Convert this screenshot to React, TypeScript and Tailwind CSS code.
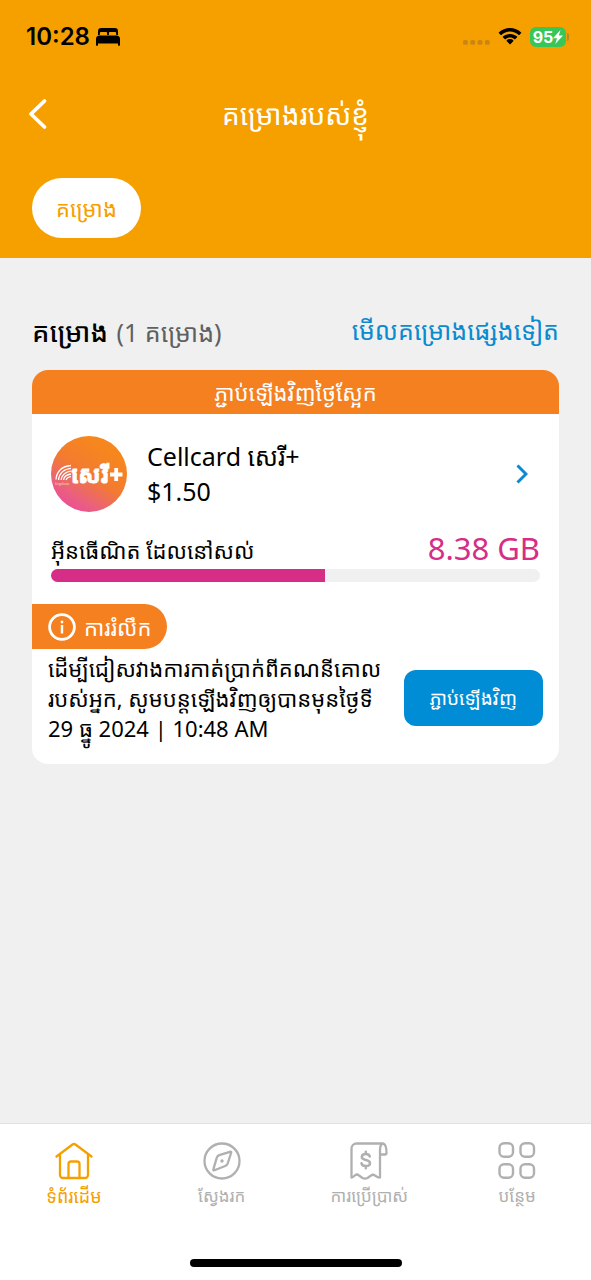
import type { ReactNode } from "react";

function StatusBar() {
  return (
    <div className="flex h-[74px] items-center justify-between pr-[22px] pl-[26px] text-black">
      <div className="flex items-center gap-1.5">
        <span className="font-['Inter',sans-serif] text-2xl leading-8 font-semibold">10:28</span>
        <svg width="24" height="18" viewBox="0 0 24 18" fill="currentColor" aria-hidden="true">
          <path d="M2 7V3.200C2 1.200 3.200 0 5.200 0h13.600C20.800 0 22 1.200 22 3.200V7h-1.800V5.400c0-.9-.6-1.400-1.500-1.400h-4.400c-1 0-1.400.5-1.400 1.400V7h-1.800V5.400c0-.9-.4-1.400-1.400-1.400H5.300c-.9 0-1.500.5-1.500 1.400V7z" />
          <path d="M3.500 7.500h17c2.200 0 3.500 1.300 3.500 3.500v5.800c0 .7-.4 1.200-1 1.200s-1-.5-1-1.200V15.500H2v1.300c0 .7-.4 1.200-1 1.200s-1-.5-1-1.200V11c0-2.200 1.300-3.500 3.500-3.500z" />
        </svg>
      </div>
      <div className="flex items-center gap-2">
        <svg width="27" height="24" viewBox="0 0 27 24" fill="#c98613" aria-hidden="true">
          <rect x="0" y="15" width="4.800" height="4.800" rx="1.500" />
          <rect x="7.300" y="15" width="4.800" height="4.800" rx="1.500" />
          <rect x="14.600" y="15" width="4.800" height="4.800" rx="1.500" />
          <rect x="21.900" y="15" width="4.800" height="4.800" rx="1.500" />
        </svg>
        <svg width="24" height="18" viewBox="0 0 24 18" fill="currentColor" aria-hidden="true">
          <path d="M12 3.600c3.300 0 6.300 1.300 8.600 3.400.2.200.5.200.7 0l1.900-1.900c.2-.2.200-.5 0-.7C20.200 1.600 16.300 0 12 0S3.800 1.600.8 4.400c-.2.200-.2.500 0 .7L2.700 7c.2.200.5.200.7 0C5.700 4.900 8.700 3.600 12 3.600z" />
          <path d="M12 9.600c1.700 0 3.200.6 4.400 1.700.2.200.5.200.7 0l2-2c.2-.2.200-.5 0-.7C17.200 6.900 14.700 5.900 12 5.900S6.800 6.900 4.900 8.600c-.2.200-.2.500 0 .7l2 2c.2.200.5.200.7 0 1.200-1.100 2.700-1.700 4.400-1.700z" />
          <path d="M15.400 13.100c.2-.2.200-.5 0-.7-.9-.8-2.100-1.300-3.400-1.300s-2.500.5-3.400 1.300c-.2.200-.2.500 0 .7l3.100 3.100c.2.200.5.200.7 0z" />
        </svg>
        <div className="flex items-center gap-px">
          <div className="flex h-5 w-9 items-center justify-center rounded-md bg-[#37c759] text-white">
            <span className="font-['Inter',sans-serif] text-base leading-5 font-bold">95</span>
            <svg width="10" height="14" viewBox="0 0 10 14" fill="currentColor" aria-hidden="true">
              <path d="M7.500 0 0 8.200h4L2.300 14 10 5.600H5.800z" />
            </svg>
          </div>
          <div className="h-2 w-0.5 rounded-r-full bg-[#b58a2a]" />
        </div>
      </div>
    </div>
  );
}

function PlanLogo() {
  return (
    <svg className="size-19 shrink-0" viewBox="0 0 76 76" role="img" aria-label="សេរី+">
      <defs>
        <linearGradient id="logo-fill" x1="0.150" y1="0.950" x2="0.650" y2="0.150">
          <stop offset="0" stopColor="#ec4a9c" />
          <stop offset="0.250" stopColor="#ea617c" />
          <stop offset="0.600" stopColor="#f37b30" />
          <stop offset="1" stopColor="#f6861e" />
        </linearGradient>
      </defs>
      <circle cx="38" cy="38" r="38" fill="url(#logo-fill)" />
      <g fill="none" stroke="#fff" strokeWidth="1.300">
        <path d="M5 43.500C5.500 35.500 11 30 20 29.500" />
        <path d="M7.500 44C8 37.500 13 32.800 20 32.300" />
        <path d="M10 44C10.500 39.500 14.500 35.600 20 35.100" />
        <path d="M12.500 44C13 41 16 38.500 20 38" />
        <path d="M15 44c.5-1.500 2-3 5-3.400" />
      </g>
      <text x="4" y="48.500" fontSize="4" fill="#fbd0bb" fontFamily="Noto Sans, sans-serif">bigdata</text>
      <text x="20" y="47" fontSize="23" fontWeight="700" fill="#fff" stroke="#fff" strokeWidth="0.800" fontFamily="Noto Sans, Noto Sans Khmer, sans-serif">សេរី</text>
      <path d="M59 38.500H71.500M65.200 32v13" stroke="#fff" strokeWidth="3.800" />
    </svg>
  );
}

function HomeIcon() {
  return (
    <svg width="38" height="38" viewBox="0 0 38 38" fill="none" stroke="currentColor" strokeWidth="2.300" strokeLinecap="round" strokeLinejoin="round" aria-hidden="true">
      <path d="M1.500 14.500 17.500 2.500q1.500-1 3 0L36.500 14.500" />
      <path d="M5 12.500v20.500a3 3 0 0 0 3 3h22a3 3 0 0 0 3-3V12.500" />
      <path d="M13.500 35.500V22a2.500 2.500 0 0 1 2.500-2.500h6a2.500 2.500 0 0 1 2.500 2.500v13.500" />
    </svg>
  );
}

function CompassIcon() {
  return (
    <svg width="38" height="38" viewBox="0 0 38 38" fill="none" stroke="currentColor" strokeWidth="2.300" strokeLinejoin="round" aria-hidden="true">
      <circle cx="19" cy="19" r="17.500" />
      <path d="M16.200 13.200 27 9.800q1.600-.4 1.100 1.200L24.700 21.500a4 4 0 0 1-2.500 2.500L11.400 28.200q-1.500.4-1-1.100l3.400-11.400a4 4 0 0 1 2.400-2.500z" />
      <circle cx="19" cy="19" r="1.700" fill="currentColor" stroke="none" />
    </svg>
  );
}

function ReceiptIcon() {
  return (
    <svg width="38" height="38" viewBox="0 0 38 38" fill="none" stroke="currentColor" strokeWidth="2.300" strokeLinecap="round" strokeLinejoin="round" aria-hidden="true">
      <path d="M33 1.500H6.500A5 5 0 0 0 1.500 6.500V35.500q1 .2 3.300-2Q7 31.500 9 33.500l3.500 2.500q2.500 1.200 5 0l3.500-2.500q2-1.500 4 0Q28.500 36 30 35.500V8.500q0-6.500 3-7 3.500.5 3.500 9.500 0 1.500-1.500 1.500H30" />
      <path strokeWidth="2.500" d="M19.800 14.500c-.4-1.600-1.900-2.500-4-2.500-2.400 0-4 1.200-4 3 0 4 8.200 2 8.200 6 0 1.900-1.700 3.100-4.200 3.100-2.300 0-4-1-4.300-2.800M15.800 9.800V12M15.800 24.200v2" />
    </svg>
  );
}

function GridIcon() {
  return (
    <svg width="38" height="38" viewBox="0 0 38 38" fill="none" stroke="currentColor" strokeWidth="2.400" aria-hidden="true">
      <rect x="1.500" y="1.200" width="13.500" height="13.500" rx="4.500" />
      <rect x="22.500" y="1.200" width="13.500" height="13.500" rx="4.500" />
      <rect x="1.500" y="22.200" width="13.500" height="13.500" rx="4.500" />
      <rect x="22.500" y="22.200" width="13.500" height="13.500" rx="4.500" />
    </svg>
  );
}

function NavItem({ label, icon, active = false }: { label: string; icon: ReactNode; active?: boolean }) {
  return (
    <a
      href="#"
      aria-current={active ? "page" : undefined}
      className={active ? "flex flex-1 flex-col items-center gap-1 text-lg text-[#f6a000]" : "flex flex-1 flex-col items-center gap-1 text-[17px] text-[#b0b0b0]"}
    >
      {icon}
      <span className="leading-6 whitespace-nowrap">{label}</span>
    </a>
  );
}

export default function App() {
  return (
    <div className="flex min-h-screen flex-col bg-[#f0f0f0] font-['Noto_Sans','Noto_Sans_Khmer',sans-serif] text-black">
      <header className="bg-[#f6a000] pb-5">
        <StatusBar />
        <div className="grid grid-cols-[1fr_auto_1fr] items-center px-7 pt-[18px]">
          <button type="button" aria-label="Back" className="flex h-11 w-5 items-center text-white">
            <svg width="20" height="32" viewBox="0 0 20 32" fill="none" stroke="currentColor" strokeWidth="3.800" strokeLinecap="round" strokeLinejoin="round" aria-hidden="true">
              <path d="M16.500 3 3 16l13.500 13" />
            </svg>
          </button>
          <h1 className="text-[28px] leading-8 text-white">គម្រោងរបស់ខ្ញុំ</h1>
        </div>
        <div className="px-8 pt-[42px]">
          <button type="button" className="h-15 rounded-full bg-white px-6 text-[22px] leading-7 text-[#f6a000]">គម្រោង</button>
        </div>
      </header>

      <main className="flex-1 px-8 pt-14">
        <div className="flex items-start justify-between">
          <h2 className="text-[25px] leading-9 whitespace-nowrap">
            <span className="mr-0.5 text-[27px] font-medium">គម្រោង</span> <span className="text-[#606060]">(1 គម្រោង)</span>
          </h2>
          <a href="#" className="text-[25px] leading-8 whitespace-nowrap text-[#0a8bd0]">មើលគម្រោងផ្សេងទៀត</a>
        </div>

        <section className="mt-5 overflow-hidden rounded-2xl bg-white pb-[21px]">
          <p className="bg-[#f58020] py-2 text-center text-[22px] leading-7 text-white">ភ្ជាប់ឡើងវិញថ្ងៃស្អែក</p>
          <a href="#" className="mx-[19px] mt-[22px] flex items-center">
            <PlanLogo />
            <span className="ml-5 flex-1 text-[25px] leading-[35px]">
              <span className="block">Cellcard សេរី+</span>
              <span className="block">$1.50</span>
            </span>
            <svg className="mr-3" width="12" height="20" viewBox="0 0 12 20" fill="none" stroke="#0a8bd0" strokeWidth="3" aria-hidden="true">
              <path d="m1.500 1.500 8.500 8.500-8.500 8.500" />
            </svg>
          </a>
          <div className="mx-[19px] mt-4">
            <div className="flex items-end justify-between pb-px">
              <span className="text-[22px] leading-9">អ៊ីនធើណិត ដែលនៅសល់</span>
              <span className="text-[31px] leading-10 text-[#d62d87]">8.38 GB</span>
            </div>
            <div role="progressbar" aria-label="8.38 GB" aria-valuenow={56} aria-valuemin={0} aria-valuemax={100} className="h-[13px] overflow-hidden rounded-full bg-[#f0f0f0]">
              <div className="h-full bg-[#d62d87]" style={{ width: "56%" }} />
            </div>
          </div>
          <div className="mt-[22px] flex">
            <div className="flex h-[45px] items-center gap-2 rounded-r-full bg-[#f58020] px-4 text-[22px] leading-7 text-white">
              <svg width="28" height="28" viewBox="0 0 28 28" fill="none" stroke="currentColor" strokeWidth="2.800" aria-hidden="true">
                <circle cx="14" cy="14" r="12.400" />
                <path d="M14 12v8.500M14 7.800v2.500" strokeWidth="2.400" />
              </svg>
              ការរំលឹក
            </div>
          </div>
          <div className="mx-4 mt-1 flex items-center justify-between">
            <p className="text-[22px] leading-[30px] whitespace-nowrap">
              ដើម្បីជៀសវាងការកាត់ប្រាក់ពីគណនីគោល
              <br />
              របស់អ្នក, សូមបន្តឡើងវិញឲ្យបានមុនថ្ងៃទី
              <br />
              29 ធ្នូ 2024 | 10:48 AM
            </p>
            <button type="button" className="h-14 rounded-xl bg-[#008dd6] px-[26px] text-[19px] leading-7 whitespace-nowrap text-white">ភ្ជាប់ឡើងវិញ</button>
          </div>
        </section>
      </main>

      <footer className="border-t border-[#e2e2e2] bg-white pt-[18px] pb-[13px]">
        <nav className="flex">
          <NavItem label="ទំព័រដើម" icon={<HomeIcon />} active />
          <NavItem label="ស្វែងរក" icon={<CompassIcon />} />
          <NavItem label="ការប្រើប្រាស់" icon={<ReceiptIcon />} />
          <NavItem label="បន្ថែម" icon={<GridIcon />} />
        </nav>
        <div className="mx-auto mt-[51px] h-2 w-[212px] rounded-full bg-black" />
      </footer>
    </div>
  );
}
